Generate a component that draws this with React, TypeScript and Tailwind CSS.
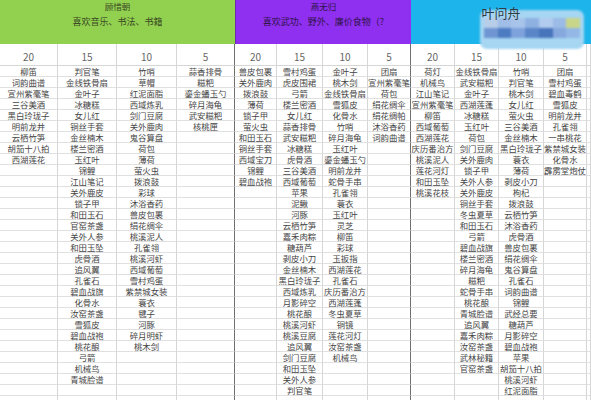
import React from "react";

const G20 = ["柳笛","词韵曲谱","宣州紫毫笔","三谷美酒","黑白玲珑子","明前龙井","云栖竹笋","胡笳十八拍","西湖莲花"];
const G15 = ["判官笔","金线铁骨扇","金叶子","冰糖糕","女儿红","铜丝手套","金丝楠木","楼兰密酒","玉红叶","锦鲤","江山笔记","关外鹿皮","锁子甲","和田玉石","官窑茶盏","关外人参","和田玉坠","虎骨酒","追风翼","孔雀石","碧血战旗","化骨水","汝窑茶盏","雪狐皮","碧血战袍","桃花酿","弓箭","机械鸟","青城脸谱"];
const G10 = ["竹哨","草帽","红泥面脂","西域炼乳","剑门豆腐","关外鹿肉","鬼谷算盘","荷包","薄荷","萤火虫","拨浪鼓","彩球","沐浴香药","兽皮包裹","绢花绸伞","桃溪泥人","孔雀翎","桃溪河虾","西域葡萄","雪村鸡蛋","紫禁城女装","蓑衣","毽子","河豚","碎月明虾","桃木剑"];
const G5 = ["蒜香排骨","糍粑","鎏金蟠玉勺","碎月海龟","武安糍粑","核桃匣"];

const P20 = ["兽皮包裹","关外鹿肉","拨浪鼓","薄荷","锁子甲","萤火虫","和田玉石","铜丝手套","西域宝刀","锦鲤","碧血战袍"];
const P15 = ["雪村鸡蛋","虎皮围裙","弓箭","楼兰密酒","女儿红","蒜香排骨","武安糍粑","冰糖糕","虎骨酒","三谷美酒","西域葡萄","苹果","泥鳅","河豚","云栖竹笋","嘉禾肉粽","糖葫芦","剥皮小刀","金丝楠木","黑白玲珑子","西域炼乳","月影碎空","桃花酿","桃溪河虾","桃溪豆腐","追风翼","剑门豆腐","和田玉坠","关外人参","判官笔"];
const P10 = ["金叶子","桃木剑","金线铁骨扇","雪狐皮","化骨水","竹哨","碎月海龟","玉红叶","鎏金蟠玉勺","明前龙井","蛇骨手串","孔雀翎","蓑衣","玉红叶","灵芝","柳笛","彩球","玉扳指","西湖莲花","孔雀石","庆历番治方","西湖莲蓬","冬虫夏草","铜镜","莲花河灯","汝窑茶盏","机械鸟"];
const P5 = ["团扇","宣州紫毫笔","荷包","绢花绸伞","绢花绸帕","沐浴香药","词韵曲谱"];

const B20 = ["荷灯","机械鸟","江山笔记","宣州紫毫笔","柳笛","西域葡萄","西湖莲花","庆历番治方","桃溪泥人","莲花河灯","和田玉坠","桃溪花枝"];
const B15 = ["金线铁骨扇","武安糍粑","金叶子","西湖莲蓬","冰糖糕","玉红叶","荷包","剑门豆腐","关外鹿肉","锁子甲","关外人参","关外鹿皮","铜丝手套","冬虫夏草","和田玉石","弓箭","碧血战旗","楼兰密酒","碎月海龟","糍粑","蛇骨手串","桃花酿","青城脸谱","追风翼","嘉禾肉粽","汝窑茶盏","武林秘籍","官窑茶盏"];
const B10 = ["竹哨","判官笔","桃木剑","女儿红","萤火虫","三谷美酒","金丝楠木","黑白玲珑子","蓑衣","薄荷","剥皮小刀","枸杞","拨浪鼓","云栖竹笋","沐浴香药","虎骨酒","兽皮包裹","绢花绸伞","鬼谷算盘","孔雀石","词韵曲谱","锦鲤","武经总要","糖葫芦","月影碎空","碧血战袍","苹果","胡笳十八拍","桃溪河虾","红泥面脂"];
const B5 = ["团扇","雪村鸡蛋","碧血毒鹤","雪狐皮","明前龙井","孔雀翎","一串桃花","紫禁城女装","化骨水","霹雳堂炮仗"];

const COLS: { data: string[]; num: string; edge: boolean }[] = [
  { data: G20, num: "20", edge: false },
  { data: G15, num: "15", edge: false },
  { data: G10, num: "10", edge: false },
  { data: G5, num: "5", edge: true },
  { data: P20, num: "20", edge: false },
  { data: P15, num: "15", edge: false },
  { data: P10, num: "10", edge: false },
  { data: P5, num: "5", edge: true },
  { data: B20, num: "20", edge: false },
  { data: B15, num: "15", edge: false },
  { data: B10, num: "10", edge: false },
  { data: B5, num: "5", edge: false },
  { data: [], num: "", edge: false },
];

const ROWS = 31;

const tiles1 = ["#b7cde8", "#9fbde6", "#a9c4ea", "#8eb1e2", "#b2cbee", "#9cbbe6", "#c9d68a"];
const tiles2 = ["#6f96d2", "#4e7cc2", "#7ea2dc", "#5a86c8", "#4874bc", "#86a8de", "#94b8e6"];

export default function App() {
  return (
    <div className="w-[591px] h-[400px] overflow-hidden bg-white font-['Noto_Sans_CJK_SC',sans-serif]">
      <div className="grid grid-cols-[58px_59px_60px_58px_42px_46px_45px_43px_44px_44px_45px_43px_1fr]">
        {/* header */}
        <div className="col-span-4 h-[44px] bg-[#92d050] flex flex-col items-center text-[#3a4a24] text-[8.5px] leading-[10px]">
          <div className="mt-[1px] h-[10px]">顾惜朝</div>
          <div className="mt-[6px] text-[9px]">喜欢音乐、书法、书籍</div>
        </div>
        <div className="col-span-4 h-[44px] bg-[#8f2ff0] flex flex-col items-center text-[#2e1448] text-[8.5px] leading-[10px] border-l border-[#6a2ab0]">
          <div className="mt-[1px] h-[10px]">燕无归</div>
          <div className="mt-[6px] text-[9px]">喜欢武功、野外、廉价食物（?</div>
        </div>
        <div className="col-span-5 h-[44px] bg-[#1db4ec] relative flex flex-col items-center">
          <div className="absolute left-[69px] top-[10px] w-[104px] h-[39px] rounded-[7px] bg-[#a6d6f2] overflow-hidden blur-[1px]">
            <div className="mt-[8px] mx-[4px] flex">
              {tiles1.map((c, i) => (
                <div key={i} className="h-[10px] flex-1" style={{ backgroundColor: c }} />
              ))}
            </div>
            <div className="mx-[4px] flex">
              {tiles2.map((c, i) => (
                <div key={i} className="h-[10px] flex-1" style={{ backgroundColor: c }} />
              ))}
            </div>
          </div>
          <div className="relative mt-[5px] text-[13px] leading-[16px] text-[#2e3a44]">叶问舟</div>
        </div>
        {/* number row */}
        {COLS.map((c, i) => (
          <div
            key={"n" + i}
            className={`h-[22px] flex items-center justify-center pt-[3px] text-[10px] text-[#666] border-b border-[#d6d6d6] ${c.edge ? "border-r border-r-[#707070]" : "border-r"} ${i === 11 ? "border-r-[#d6d6d6]" : ""}`}
          >
            {c.num}
          </div>
        ))}
        {/* data rows */}
        {Array.from({ length: ROWS }).map((_, r) =>
          COLS.map((c, i) => (
            <div
              key={r + "-" + i}
              className={`h-[11px] flex items-center justify-center whitespace-nowrap text-[8.4px] leading-[10px] text-[#454545] border-b border-[#e0e0e0] ${c.edge ? "border-r border-r-[#707070]" : "border-r border-r-[#d6d6d6]"}`}
            >
              {c.data[r] ?? ""}
            </div>
          ))
        )}
      </div>
    </div>
  );
}
